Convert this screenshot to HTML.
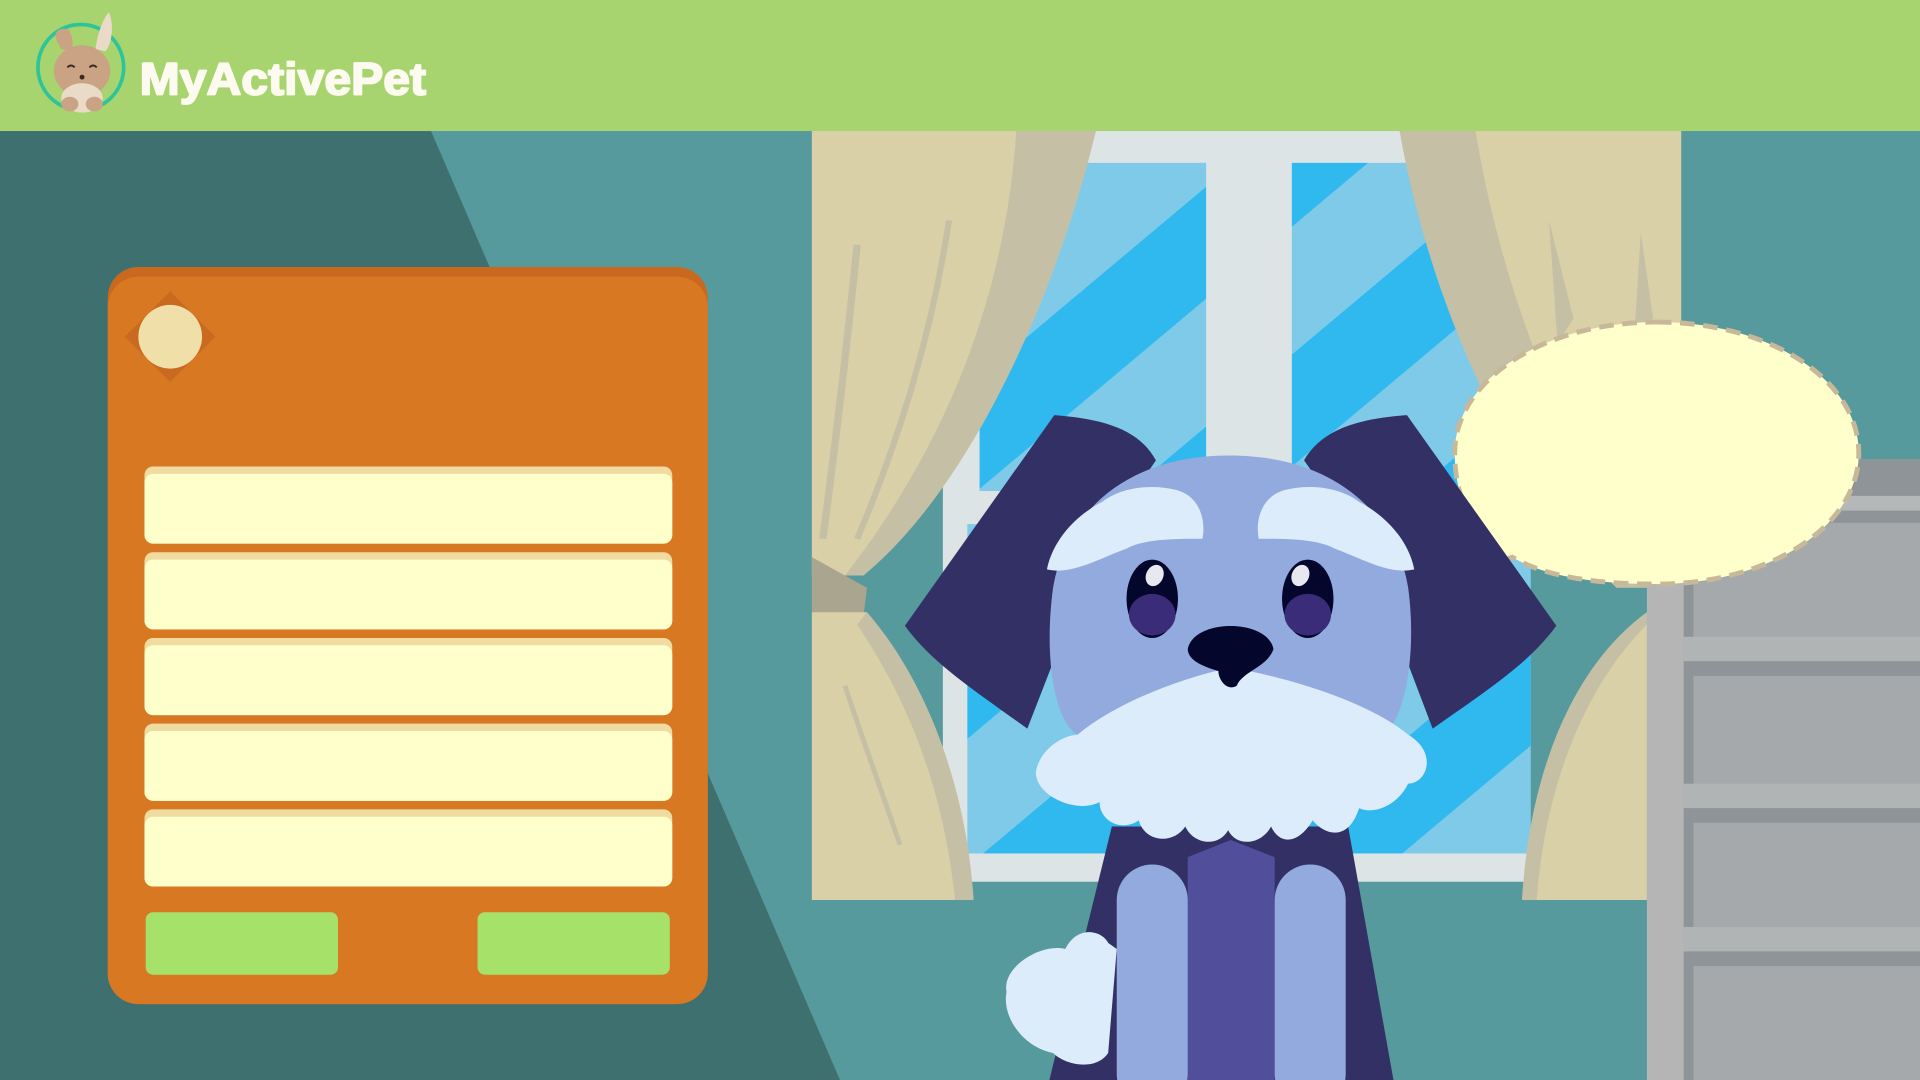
<!DOCTYPE html>
<html><head><meta charset="utf-8"><style>
html,body{margin:0;padding:0;width:1920px;height:1080px;overflow:hidden;background:#579a9e}
svg{display:block}
</style></head><body>
<svg width="1920" height="1080" viewBox="0 0 1568 882" preserveAspectRatio="none" xmlns="http://www.w3.org/2000/svg">
<defs>
<pattern id="sky" patternUnits="userSpaceOnUse" width="150" height="150" patternTransform="rotate(-40)">
<rect width="150" height="150" fill="#7ecae8"/>
<rect y="0" width="150" height="70" fill="#2fb9ef"/>
</pattern>
</defs>
<rect x="0" y="0" width="1568" height="882" fill="#579a9e"/>
<polygon points="0,107 352,107 686,882 0,882" fill="#3f7070"/>
<rect x="770" y="107" width="480" height="613" fill="#dce4e6"/>
<rect x="800" y="133" width="185" height="268" fill="url(#sky)"/>
<rect x="1055" y="133" width="180" height="268" fill="url(#sky)"/>
<rect x="790" y="428" width="460" height="270" fill="url(#sky)"/>
<rect x="790" y="697" width="460" height="23" fill="#dce4e6"/>
<path d="M663,107 L895,107 C860,250 790,400 705,470 L663,470 Z" fill="#d9d0a8"/>
<path d="M830,107 L895,107 C860,250 790,400 705,470 L690,470 C760,380 820,260 830,107Z" fill="#c5bfa5"/>
<path d="M700,200 C690,300 680,380 672,440" stroke="#c5bfa5" stroke-width="6" fill="none"/>
<path d="M775,180 C760,280 730,370 700,440" stroke="#c5bfa5" stroke-width="5" fill="none"/>
<path d="M663,455 L708,480 L705,505 L663,500Z" fill="#a9a58f"/>
<path d="M663,500 L708,500 C760,560 790,650 795,735 L663,735Z" fill="#d9d0a8"/>
<path d="M708,500 C760,560 790,650 795,735 L780,735 C770,640 740,570 700,510Z" fill="#c5bfa5"/>
<path d="M690,560 C710,620 725,660 735,690" stroke="#c5bfa5" stroke-width="4" fill="none"/>
<path d="M1143,107 L1373,107 L1373,480 L1345,480 C1260,420 1180,260 1143,107Z" fill="#d9d0a8"/>
<path d="M1143,107 L1205,107 C1230,260 1290,380 1345,480 L1320,480 C1240,400 1170,260 1143,107Z" fill="#c5bfa5"/>
<path d="M1265,180 L1285,260 L1272,280Z" fill="#c5bfa5"/>
<path d="M1340,190 L1350,260 L1335,270Z" fill="#c5bfa5"/>
<path d="M1345,500 C1290,540 1250,620 1243,735 L1345,735Z" fill="#d9d0a8"/>
<path d="M1345,500 C1290,540 1250,620 1243,735 L1255,735 C1262,640 1295,560 1345,510Z" fill="#c5bfa5"/>
<rect x="1345" y="375" width="223" height="507" fill="#a5a9ab"/>
<rect x="1345" y="375" width="30" height="507" fill="#b4b5b4"/>
<rect x="1345" y="375" width="223" height="30" fill="#8e9497"/>
<rect x="1375" y="405" width="193" height="12" fill="#b4b8b8"/>
<rect x="1375" y="417" width="193" height="10" fill="#8e9497"/>
<rect x="1375" y="520" width="193" height="20" fill="#b0b4b4"/>
<rect x="1375" y="540" width="193" height="12" fill="#8e9497"/>
<rect x="1375" y="640" width="193" height="20" fill="#b0b4b4"/>
<rect x="1375" y="660" width="193" height="12" fill="#8e9497"/>
<rect x="1375" y="757" width="193" height="20" fill="#b0b4b4"/>
<rect x="1375" y="777" width="193" height="12" fill="#8e9497"/>
<rect x="1375" y="552" width="8" height="88" fill="#8e9497"/>
<rect x="1375" y="672" width="8" height="85" fill="#8e9497"/>
<rect x="1375" y="789" width="8" height="93" fill="#8e9497"/>
<rect x="1375" y="427" width="8" height="93" fill="#8e9497"/>
<path d="M1353,263 C1445,263 1518,310 1518,370 C1518,430 1445,477 1353,477 C1300,477 1260,470 1235,455 L1188,472 L1215,445 C1198,425 1188,400 1188,370 C1188,310 1261,263 1353,263Z" fill="#ffffcc" stroke="#c8b89a" stroke-width="4" stroke-dasharray="12 7"/>
<path d="M861,339 C900,342 930,350 944,376 L900,440 L886,474 L839,595 C790,560 760,540 739,511 Z" fill="#323065"/>
<path d="M1149,339 C1110,342 1080,350 1065,376 L1110,440 L1124,474 L1170,595 C1220,560 1250,540 1271,511 Z" fill="#323065"/>
<path d="M908,675 L1101,675 L1138,882 L857,882 Z" fill="#323065"/>
<path d="M970,700 L1005,686 L1041,700 L1041,882 L970,882Z" fill="#514f9b"/>
<rect x="912" y="706" width="58" height="200" rx="29" fill="#93aadf"/>
<rect x="1041" y="706" width="58" height="200" rx="29" fill="#93aadf"/>
<path d="M1004,372 C1090,372 1140,420 1150,480 C1158,540 1145,590 1130,600 L880,600 C862,590 852,540 860,480 C870,420 918,372 1004,372Z" fill="#93aadf"/>
<path d="M1005,545 C1060,555 1120,575 1150,600 C1175,615 1165,640 1150,640 C1140,660 1120,665 1110,660 C1100,690 1080,680 1072,670 C1060,690 1045,690 1038,675 C1030,690 1010,692 1003,678 C995,692 975,690 968,675 C958,690 935,688 930,670 C915,680 898,670 898,655 C880,665 845,650 846,630 C850,610 870,600 880,600 C910,575 960,555 1005,545Z" fill="#dcecfa"/>
<path d="M855,465 C860,440 880,420 900,410 C915,398 940,395 960,400 C980,405 985,425 982,440 C960,440 935,440 920,448 C900,455 875,470 855,465Z" fill="#dcecfa"/>
<path d="M1155,465 C1150,440 1130,420 1110,410 C1095,398 1070,395 1050,400 C1030,405 1025,425 1028,440 C1050,440 1075,440 1090,448 C1110,455 1135,470 1155,465Z" fill="#dcecfa"/>
<ellipse cx="941" cy="489" rx="21" ry="32" fill="#05062b"/>
<ellipse cx="941" cy="502" rx="19" ry="17" fill="#3a2c78"/>
<ellipse cx="943" cy="470" rx="7" ry="9" fill="#e8e8f0" transform="rotate(25 943 470)"/>
<ellipse cx="1068" cy="489" rx="21" ry="32" fill="#05062b"/>
<ellipse cx="1068" cy="502" rx="19" ry="17" fill="#3a2c78"/>
<ellipse cx="1062" cy="470" rx="7" ry="9" fill="#e8e8f0" transform="rotate(25 1062 470)"/>
<path d="M970,530 C975,505 1035,505 1040,530 C1035,545 1015,548 1010,560 C1002,565 995,555 995,548 C985,545 970,540 970,530Z" fill="#05062b"/>
<path d="M870,775 C880,755 900,760 905,770 L912,775 L905,860 C895,875 870,870 860,860 C835,855 818,830 822,810 C818,790 850,770 870,775Z" fill="#dcecfa"/>
<rect x="88" y="218" width="490" height="602" rx="25" fill="#c9691f"/>
<rect x="88" y="226" width="490" height="594" rx="25" fill="#d97823"/>
<polygon points="139,238 176,275 139,312 102,275" fill="#c96a20"/>
<circle cx="139" cy="275" r="26" fill="#f0dfa8"/>
<g fill="#f0dca0">
<rect x="118" y="381" width="431" height="63" rx="7"/>
<rect x="118" y="451" width="431" height="63" rx="7"/>
<rect x="118" y="521" width="431" height="63" rx="7"/>
<rect x="118" y="591" width="431" height="63" rx="7"/>
<rect x="118" y="661" width="431" height="63" rx="7"/>
</g>
<g fill="#ffffcc">
<rect x="118" y="387" width="431" height="57" rx="7"/>
<rect x="118" y="457" width="431" height="57" rx="7"/>
<rect x="118" y="527" width="431" height="57" rx="7"/>
<rect x="118" y="597" width="431" height="57" rx="7"/>
<rect x="118" y="667" width="431" height="57" rx="7"/>
</g>
<rect x="119" y="745" width="157" height="51" rx="6" fill="#a6e26a"/>
<rect x="390" y="745" width="157" height="51" rx="6" fill="#a6e26a"/>
<rect x="0" y="0" width="1568" height="107" fill="#a8d46f"/>
<circle cx="66" cy="55" r="35" fill="none" stroke="#2ec49a" stroke-width="3"/>
<path d="M50,40 C42,28 45,22 56,24 C60,30 60,38 58,42Z" fill="#c9a383"/>
<path d="M78,40 C80,25 85,14 89,10 C93,20 92,35 86,42Z" fill="#eadbc8"/>
<ellipse cx="67" cy="58" rx="23" ry="21" fill="#c9a383"/>
<ellipse cx="67" cy="80" rx="17" ry="12" fill="#eadbc8"/>
<ellipse cx="57" cy="85" rx="7" ry="6" fill="#c9a383"/>
<ellipse cx="77" cy="85" rx="7" ry="6" fill="#c9a383"/>
<path d="M55,55 q3,-3 6,0 M73,55 q3,-3 6,0" stroke="#3a2a22" stroke-width="1.5" fill="none"/>
<circle cx="67" cy="63" r="2" fill="#3a2a22"/>
<text x="114" y="77" font-family="Liberation Sans, sans-serif" font-weight="bold" font-size="37" fill="#fdfbef" stroke="#fdfbef" stroke-width="1.5" stroke-linejoin="round" textLength="234" lengthAdjust="spacingAndGlyphs">MyActivePet</text>
</svg>
</body></html>
